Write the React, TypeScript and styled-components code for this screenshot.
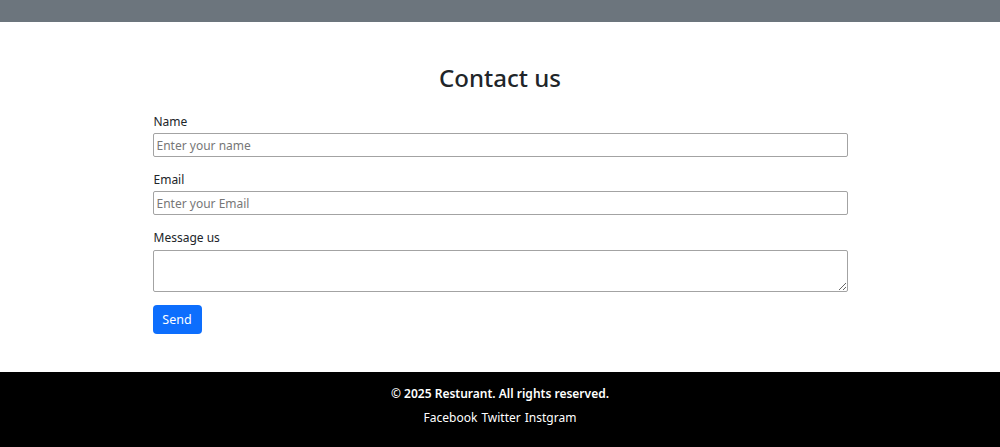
import React from "react";
import styled, { createGlobalStyle } from "styled-components";

const GlobalStyle = createGlobalStyle`
  body {
    margin: 0;
    background: #fff;
    font-family: "Noto Sans", "Open Sans", sans-serif;
    color: #212529;
  }
`;

const TopBar = styled.div`
  height: 22px;
  background: #6c757d;
`;

const Main = styled.main`
  padding: 40px 0 38px;
`;

const Title = styled.h2`
  margin: 0 0 19px;
  text-align: center;
  font-size: 24px;
  font-weight: 500;
  line-height: 31px;
  color: #212529;
`;

const Form = styled.form`
  width: 695px;
  margin: 0 auto;
  display: flex;
  flex-direction: column;
`;

const Field = styled.div`
  display: flex;
  flex-direction: column;
  margin-bottom: 13px;
`;

const Label = styled.label`
  font-size: 12px;
  line-height: 19px;
  margin-bottom: 2px;
  padding-left: 1px;
  color: #212529;
`;

const Input = styled.input`
  box-sizing: border-box;
  height: 24px;
  padding: 0 3px;
  border: 1px solid #a3a3a3;
  border-radius: 2px;
  font-family: inherit;
  font-size: 12px;
  color: #212529;

  &::placeholder {
    color: #777;
  }
`;

const TextArea = styled.textarea`
  box-sizing: border-box;
  height: 42px;
  margin-top: 1px;
  padding: 3px;
  border: 1px solid #a3a3a3;
  border-radius: 2px;
  font-family: inherit;
  font-size: 12px;
`;

const SendButton = styled.button`
  align-self: flex-start;
  width: 49px;
  height: 29px;
  border: none;
  border-radius: 4px;
  background: #0d6efd;
  color: #fff;
  font-family: inherit;
  font-size: 12.5px;
  cursor: pointer;
`;

const Footer = styled.footer`
  background: #000;
  color: #fff;
  height: 75px;
  display: flex;
  flex-direction: column;
  align-items: center;
  padding-top: 12px;
  box-sizing: border-box;
`;

const Copy = styled.p`
  margin: 0 0 5px;
  font-size: 12px;
  font-weight: 600;
  line-height: 19px;
`;

const Links = styled.div`
  display: flex;
  gap: 4px;
  font-size: 12px;
  line-height: 19px;
`;

const FooterLink = styled.a`
  color: #fff;
  text-decoration: none;
`;

export default function App() {
  return (
    <>
      <GlobalStyle />
      <TopBar />
      <Main>
        <Title>Contact us</Title>
        <Form onSubmit={(e) => e.preventDefault()}>
          <Field>
            <Label htmlFor="name">Name</Label>
            <Input id="name" type="text" placeholder="Enter your name" />
          </Field>
          <Field>
            <Label htmlFor="email">Email</Label>
            <Input id="email" type="email" placeholder="Enter your Email" />
          </Field>
          <Field>
            <Label htmlFor="message">Message us</Label>
            <TextArea id="message" />
          </Field>
          <SendButton type="submit">Send</SendButton>
        </Form>
      </Main>
      <Footer>
        <Copy>© 2025 Resturant. All rights reserved.</Copy>
        <Links>
          <FooterLink href="#">Facebook</FooterLink>
          <FooterLink href="#">Twitter</FooterLink>
          <FooterLink href="#">Instgram</FooterLink>
        </Links>
      </Footer>
    </>
  );
}
